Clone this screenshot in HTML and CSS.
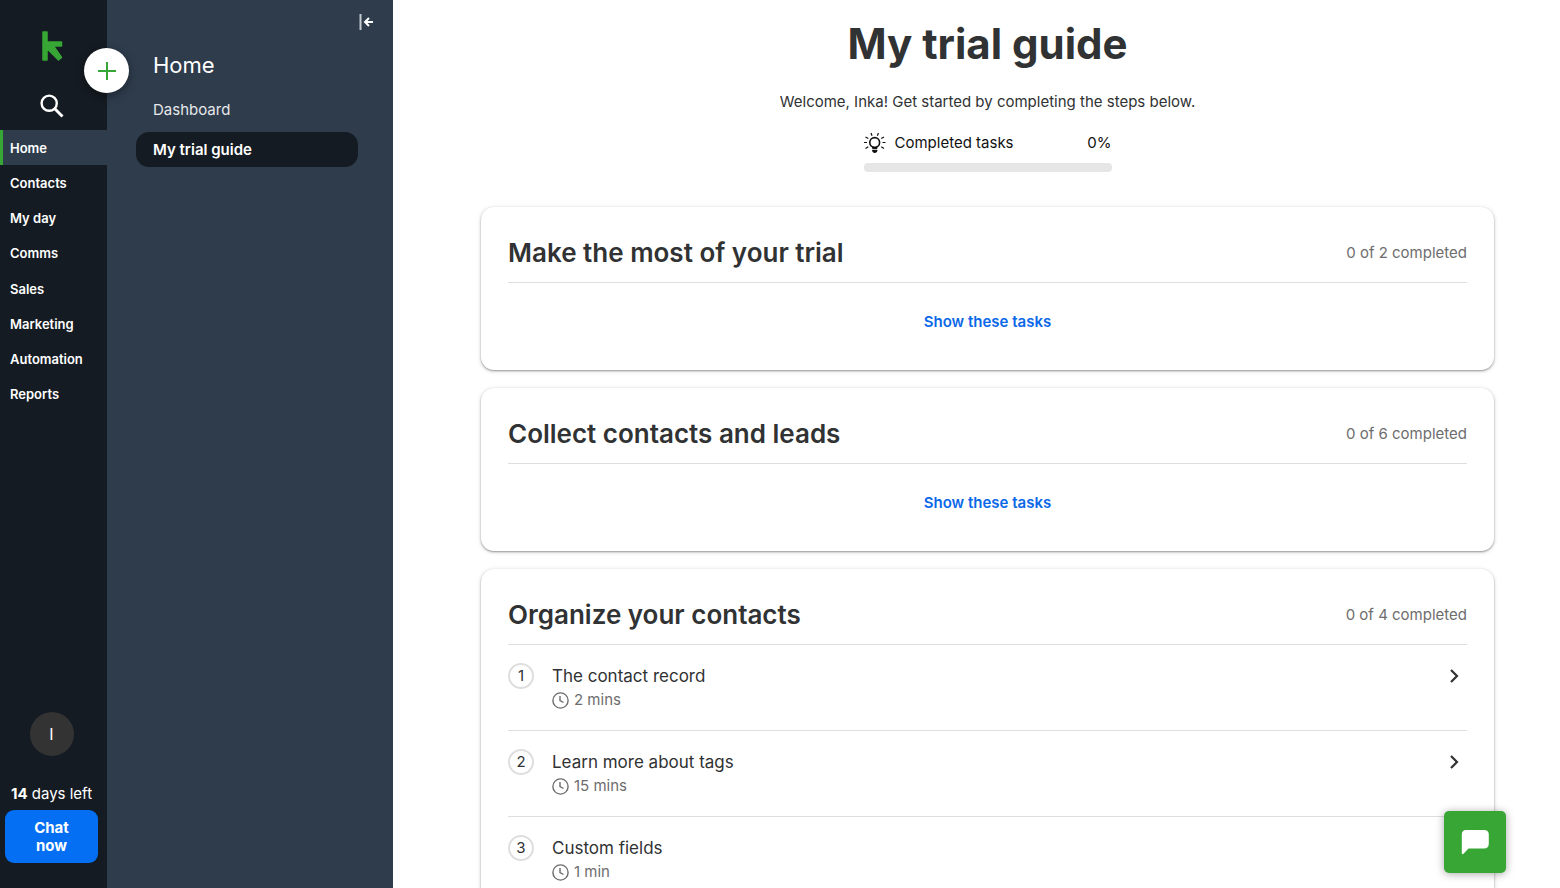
FILE: index.html
```html
<!DOCTYPE html>
<html lang="en">
<head>
<meta charset="utf-8">
<title>My trial guide</title>
<link rel="stylesheet" href="styles.css">
</head>
<body>
<div class="app">
  <aside class="rail">
    <a class="logo" href="#" aria-label="Home page">
      <svg width="22" height="32" viewBox="0 0 22 32" fill="#37a635" stroke="#37a635" stroke-width="1.500" stroke-linejoin="round"><path d="M2 2H6V12H20.500V16H12.500L20.500 27.500L17.500 30L6 18.500V30H2Z"/></svg>
    </a>
    <button class="search" aria-label="Search">
      <svg width="24" height="24" viewBox="0 0 24 24" fill="none" stroke="#fff" stroke-width="2.400"><circle cx="9.200" cy="9.200" r="7.600"/><path d="M14.800 14.800L22.500 22.500" stroke-width="3"/></svg>
    </button>
    <nav class="nav">
      <a class="nav-item active" href="#">Home</a>
      <a class="nav-item" href="#">Contacts</a>
      <a class="nav-item" href="#">My day</a>
      <a class="nav-item" href="#">Comms</a>
      <a class="nav-item" href="#">Sales</a>
      <a class="nav-item" href="#">Marketing</a>
      <a class="nav-item" href="#">Automation</a>
      <a class="nav-item" href="#">Reports</a>
    </nav>
    <div class="account">
      <button class="avatar" aria-label="Account">I</button>
      <p class="days"><b>14</b> days left</p>
      <button class="chat-now">Chat<br>now</button>
    </div>
    <button class="add" aria-label="Add">
      <svg width="18" height="18" viewBox="0 0 18 18" stroke="#37a635" stroke-width="2"><path d="M9 0V18M0 9H18"/></svg>
    </button>
  </aside>
  <aside class="panel">
    <button class="collapse" aria-label="Collapse menu">
      <svg width="16" height="18" viewBox="0 0 16 18" fill="none" stroke="#fff"><path d="M2.500 1V17" stroke="#c5cad0" stroke-width="2"/><path d="M15 9H7.500M11 5L7 9L11 13" stroke-width="2"/></svg>
    </button>
    <h2 class="panel-title">Home</h2>
    <nav class="panel-nav">
      <a class="panel-link" href="#">Dashboard</a>
      <a class="panel-link current" href="#">My trial guide</a>
    </nav>
  </aside>
  <main class="main">
    <header class="intro">
      <h1 class="title">My trial guide</h1>
      <p class="welcome">Welcome, Inka! Get started by completing the steps below.</p>
      <div class="progress">
        <div class="progress-row">
          <svg width="22" height="22" viewBox="0 0 22 22" fill="none" stroke="#111"><circle cx="10.700" cy="10.500" r="4.900" stroke-width="1.600"/><path d="M8.500 14.500L9 16.500H12.500L13 14.500" stroke-width="1.300"/><path d="M8 18H13.500C13.500 22 8 22 8 18Z" fill="#111" stroke="none"/><path d="M0 10.500H3M18.500 10.500H21.500M1.500 5L4.300 6.500M20 5L17.200 6.500M1.500 16.500L4.300 14.800M20 16.500L17.200 14.800M7 1L8 3.800M14.400 1L13.400 3.800" stroke-width="1.200"/></svg>
          <span>Completed tasks</span>
          <span class="percent">0%</span>
        </div>
        <div class="track" role="progressbar" aria-label="Completed tasks" aria-valuenow="0" aria-valuemin="0" aria-valuemax="100"></div>
      </div>
    </header>
    <div class="cards">
      <section class="card">
        <div class="card-head"><h2 class="card-title">Make the most of your trial</h2><span class="count">0 of 2 completed</span></div>
        <div class="card-more"><button class="show">Show these tasks</button></div>
      </section>
      <section class="card">
        <div class="card-head"><h2 class="card-title">Collect contacts and leads</h2><span class="count">0 of 6 completed</span></div>
        <div class="card-more"><button class="show">Show these tasks</button></div>
      </section>
      <section class="card">
        <div class="card-head"><h2 class="card-title">Organize your contacts</h2><span class="count">0 of 4 completed</span></div>
        <ol class="tasks">
          <li><a class="task" href="#">
            <span class="number">1</span>
            <span class="task-text"><span class="task-name">The contact record</span><span class="time"><svg width="17" height="17" viewBox="0 0 17 17" fill="none" stroke="#6d6d6d" stroke-width="1.400"><circle cx="8.500" cy="8.500" r="7.600"/><path d="M8 4V8.500L11.500 10.500"/></svg>2 mins</span></span>
            <svg class="chevron" width="10" height="14" viewBox="0 0 10 14" fill="none" stroke="#303233" stroke-width="2.200"><path d="M2 1L8 7L2 13"/></svg>
          </a></li>
          <li><a class="task" href="#">
            <span class="number">2</span>
            <span class="task-text"><span class="task-name">Learn more about tags</span><span class="time"><svg width="17" height="17" viewBox="0 0 17 17" fill="none" stroke="#6d6d6d" stroke-width="1.400"><circle cx="8.500" cy="8.500" r="7.600"/><path d="M8 4V8.500L11.500 10.500"/></svg>15 mins</span></span>
            <svg class="chevron" width="10" height="14" viewBox="0 0 10 14" fill="none" stroke="#303233" stroke-width="2.200"><path d="M2 1L8 7L2 13"/></svg>
          </a></li>
          <li><a class="task" href="#">
            <span class="number">3</span>
            <span class="task-text"><span class="task-name">Custom fields</span><span class="time"><svg width="17" height="17" viewBox="0 0 17 17" fill="none" stroke="#6d6d6d" stroke-width="1.400"><circle cx="8.500" cy="8.500" r="7.600"/><path d="M8 4V8.500L11.500 10.500"/></svg>1 min</span></span>
            <svg class="chevron" width="10" height="14" viewBox="0 0 10 14" fill="none" stroke="#303233" stroke-width="2.200"><path d="M2 1L8 7L2 13"/></svg>
          </a></li>
        </ol>
      </section>
    </div>
  </main>
  <button class="messenger" aria-label="Open chat">
    <svg width="28" height="26" viewBox="0 0 28 26" fill="#fff"><path d="M5 1H23Q27.800 1 27.800 5.500V14.500Q27.800 19.500 23 19.500H7.500L2.500 24.800Q.8 26 .8 24V5.500Q.8 1 5 1Z"/></svg>
  </button>
</div>
</body>
</html>
```
FILE: styles.css
```css
* { box-sizing: border-box; }

body {
  margin: 0;
  font-family: Inter, "Liberation Sans", sans-serif;
  font-size: 16px;
  line-height: 20px;
  color: #303233;
}

h1, h2, p, ol { margin: 0; padding: 0; }
ol { list-style: none; }
a { color: inherit; text-decoration: none; }
svg { display: block; flex: none; }

button {
  padding: 0;
  border: 0;
  background: none;
  font: inherit;
  color: inherit;
  cursor: pointer;
}

.app {
  display: grid;
  grid-template-columns: 107px 286px minmax(0, 1fr);
  height: 100vh;
}

/* Dark navigation rail */
.rail {
  position: relative;
  display: flex;
  flex-direction: column;
  padding-top: 30px;
  background: #151b22;
  color: #fff;
}
.logo { align-self: center; margin-right: 4px; }
.search { align-self: center; margin: 32px 4px 0 0; }
.nav {
  display: grid;
  grid-auto-rows: 1fr;
  height: 282px;
  margin-top: 12px;
  font-size: 13px;
  font-weight: 600;
}
.nav-item {
  display: flex;
  align-items: center;
  padding-left: 7px;
  border-left: 3px solid transparent;
}
.nav-item.active { background: #2e3c4c; border-left-color: #37a635; }

.account {
  display: flex;
  flex-direction: column;
  align-items: center;
  margin-top: auto;
  padding: 0 9px 25px 5px;
}
.avatar {
  width: 44px;
  height: 44px;
  border-radius: 50%;
  background: #333;
}
.days { margin: 28px 0 6px; font-size: 15px; white-space: nowrap; }
.chat-now {
  width: 100%;
  height: 53px;
  border-radius: 9px;
  background: #046ff2;
  font-size: 15px;
  line-height: 18px;
  font-weight: 700;
}
.add {
  position: absolute;
  top: 48px;
  right: -22px;
  z-index: 1;
  display: grid;
  place-items: center;
  width: 45px;
  height: 45px;
  border-radius: 50%;
  background: #fff;
  box-shadow: 0 3px 10px rgba(0, 0, 0, .4);
}

/* Section menu */
.panel {
  display: flex;
  flex-direction: column;
  padding: 13px 35px 0 29px;
  background: #2e3c4c;
  color: #fff;
}
.collapse { align-self: flex-end; margin-right: -16px; }
.panel-title {
  margin: 20px 0 18px 17px;
  font-size: 22px;
  line-height: 28px;
  font-weight: 400;
}
.panel-nav { display: grid; gap: 5px; }
.panel-link {
  padding: 3px 17px;
  font-size: 15px;
  line-height: 19px;
  color: #e6e8ea;
}
.panel-link.current {
  margin-top: 5px;
  padding: 8px 17px;
  border-radius: 13px;
  background: #151b22;
  color: #fff;
  font-weight: 600;
}

/* Guide */
.main {
  padding: 14px 66px 40px 88px;
  overflow-y: auto;
  scrollbar-width: none;
}
.intro { display: flex; flex-direction: column; align-items: center; }
.title { font-size: 42px; line-height: 60px; font-weight: 700; }
.welcome { margin-top: 18px; font-size: 15px; }
.progress { width: 248px; margin-top: 20px; color: #111; }
.progress-row { display: flex; align-items: center; gap: 9px; font-size: 15px; }
.percent { margin-left: auto; }
.track { height: 9px; margin-top: 9px; border-radius: 4px; background: #e6e6e6; }

.cards { display: grid; gap: 18px; margin-top: 35px; }
.card {
  padding: 26px 27px 0;
  border-radius: 13px;
  background: #fff;
  box-shadow: 0 1px 2px rgba(0, 0, 0, .35), 0 1px 5px rgba(0, 0, 0, .15);
}
.card-head {
  display: flex;
  align-items: center;
  justify-content: space-between;
  padding-bottom: 9px;
  border-bottom: 1px solid #dedede;
}
.card-title { font-size: 26px; line-height: 40px; font-weight: 600; }
.count { font-size: 15px; color: #6d6d6d; }
.card-more { padding: 29px 0 38px; text-align: center; }
.show { display: block; margin: 0 auto; font-size: 15px; font-weight: 600; color: #0b68e8; }

.task {
  display: flex;
  align-items: flex-start;
  gap: 18px;
  padding: 18px 8px 18px 0;
  border-bottom: 1px solid #dedede;
}
.number {
  display: grid;
  place-items: center;
  width: 26px;
  height: 26px;
  border: 2px solid #dedede;
  border-radius: 50%;
  font-size: 15px;
}
.task-text { display: grid; flex: 1; gap: 1px; }
.task-name { font-size: 17px; line-height: 26px; }
.time {
  display: flex;
  align-items: center;
  gap: 5px;
  padding-bottom: 2px;
  font-size: 15px;
  color: #6d6d6d;
}
.chevron { margin-top: 6px; }

.messenger {
  position: fixed;
  right: 54px;
  bottom: 15px;
  display: grid;
  place-items: center;
  width: 62px;
  height: 62px;
  border-radius: 5px;
  background: #37a635;
  box-shadow: 0 1px 9px rgba(0, 0, 0, .35);
}
```
